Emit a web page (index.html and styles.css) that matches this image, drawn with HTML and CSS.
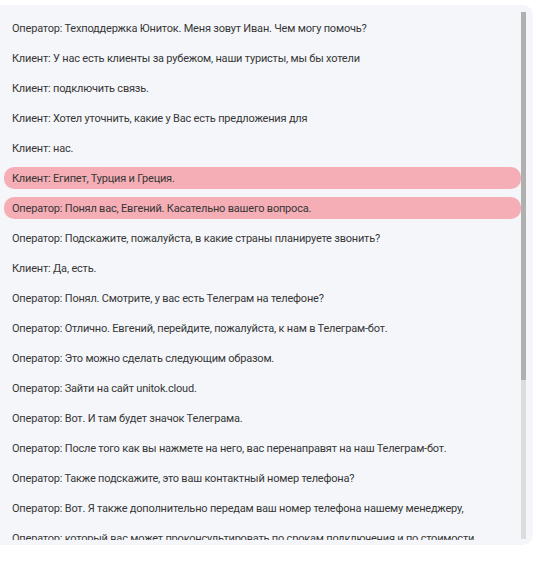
FILE: index.html
```html
<!DOCTYPE html>
<html lang="ru">
<head>
<meta charset="utf-8">
<title>Транскрипция</title>
<link rel="stylesheet" href="styles.css">
</head>
<body>
<div class="panel">
  <div class="scroll">
    <div class="row">Оператор: Техподдержка Юниток. Меня зовут Иван. Чем могу помочь?</div>
    <div class="row">Клиент: У нас есть клиенты за рубежом, наши туристы, мы бы хотели</div>
    <div class="row">Клиент: подключить связь.</div>
    <div class="row">Клиент: Хотел уточнить, какие у Вас есть предложения для</div>
    <div class="row">Клиент: нас.</div>
    <div class="row hl">Клиент: Египет, Турция и Греция.</div>
    <div class="row hl">Оператор: Понял вас, Евгений. Касательно вашего вопроса.</div>
    <div class="row">Оператор: Подскажите, пожалуйста, в какие страны планируете звонить?</div>
    <div class="row">Клиент: Да, есть.</div>
    <div class="row">Оператор: Понял. Смотрите, у вас есть Телеграм на телефоне?</div>
    <div class="row">Оператор: Отлично. Евгений, перейдите, пожалуйста, к нам в Телеграм-бот.</div>
    <div class="row">Оператор: Это можно сделать следующим образом.</div>
    <div class="row">Оператор: Зайти на сайт unitok.cloud.</div>
    <div class="row">Оператор: Вот. И там будет значок Телеграма.</div>
    <div class="row">Оператор: После того как вы нажмете на него, вас перенаправят на наш Телеграм-бот.</div>
    <div class="row">Оператор: Также подскажите, это ваш контактный номер телефона?</div>
    <div class="row">Оператор: Вот. Я также дополнительно передам ваш номер телефона нашему менеджеру,</div>
    <div class="row">Оператор: который вас может проконсультировать по срокам подключения и по стоимости</div>
    <div class="row">Оператор: услуг.</div>
    <div class="row">Клиент: Да, это мой номер.</div>
    <div class="row">Оператор: Хорошо. Менеджер свяжется с вами в ближайшее время.</div>
    <div class="row">Клиент: Спасибо.</div>
    <div class="row">Оператор: Могу ли я еще чем-нибудь помочь?</div>
    <div class="row">Клиент: Нет, спасибо, всего доброго.</div>
    <div class="row">Оператор: Спасибо за обращение. Всего доброго!</div>
  </div>
  <div class="track"><div class="thumb"></div></div>
</div>
</body>
</html>
```

FILE: styles.css
```css
html, body {
  margin: 0;
  padding: 0;
  background: #ffffff;
}

body {
  font-family: "Roboto", "Liberation Sans", sans-serif;
  font-size: 11px;
  letter-spacing: -0.2px;
  color: #363636;
}

.panel {
  margin-top: 5px;
  width: 533px;
  height: 540px;
  background: #f5f6fa;
  border-radius: 0 10px 10px 0;
  box-sizing: border-box;
  padding: 12px 7px 5px 4px;
  display: flex;
}

.scroll {
  flex: 1 1 auto;
  min-width: 0;
  overflow: hidden;
  display: flex;
  flex-direction: column;
  gap: 8px;
}

.row {
  flex: 0 0 auto;
  height: 22px;
  line-height: 24px;
  padding-left: 8px;
  white-space: nowrap;
  overflow: hidden;
  border-radius: 10px;
}

.row.hl {
  background: #f5aeb5;
}

.track {
  flex: 0 0 5px;
  margin: -5px 0 1px 0;
  background: #dcdcdc;
  display: flex;
  flex-direction: column;
}

.thumb {
  flex: 0 0 368px;
  background: #b0b0b0;
}
```
